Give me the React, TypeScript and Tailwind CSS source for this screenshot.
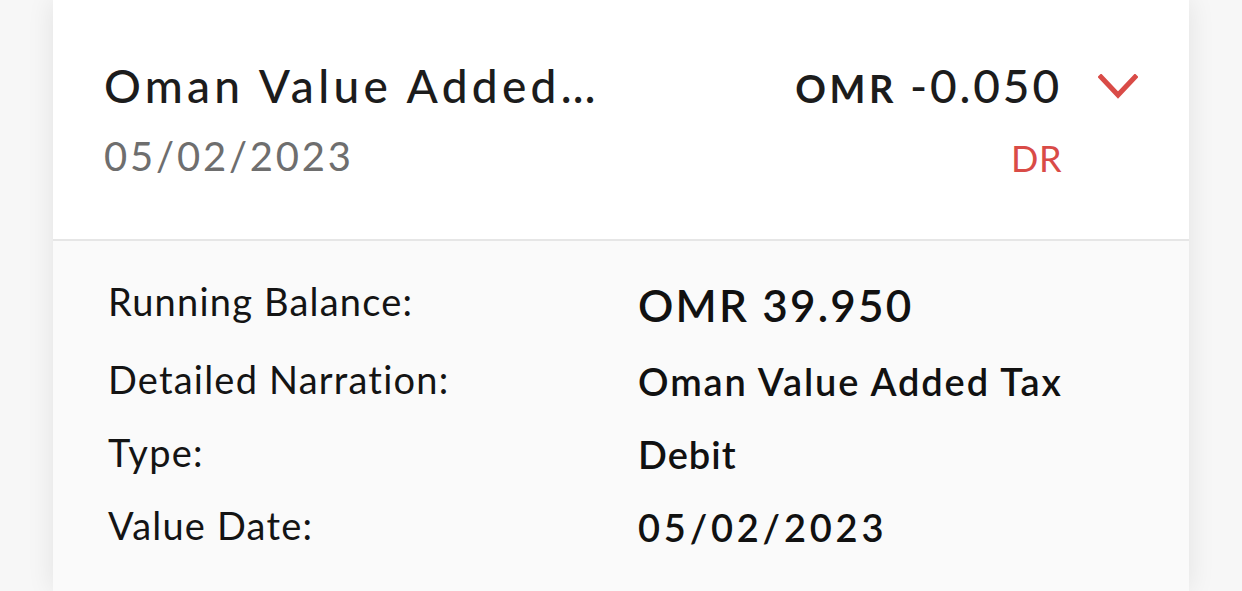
import React from 'react';

const font = { fontFamily: 'Lato, "Noto Sans", sans-serif' };

const details = [
  { label: 'Running Balance:', value: 'OMR 39.950', cls: 'text-[44px] leading-[54px] tracking-[2.2px] pt-[8px]' },
  { label: 'Detailed Narration:', value: 'Oman Value Added Tax', cls: 'text-[38px] leading-[48px] tracking-[1.9px] pt-[4px]' },
  { label: 'Type:', value: 'Debit', cls: 'text-[38px] leading-[48px] tracking-[1px] pt-[4px]' },
  { label: 'Value Date:', value: '05/02/2023', cls: 'text-[38px] leading-[48px] tracking-[3.8px] pt-[4px]' },
];

const Chevron = () => (
  <svg width="40" height="26" viewBox="0 0 40 26" fill="none">
    <path d="M3 3 L20 21 L37 3" stroke="#d94b47" strokeWidth="5" strokeLinecap="square" />
  </svg>
);

export default function App() {
  return (
    <div className="w-[1242px] h-[591px] overflow-hidden bg-[#f7f7f7]" style={font}>
      <div className="mx-[53px] h-full bg-white shadow-[0_0_26px_rgba(0,0,0,0.09)] flex flex-col">
        {/* Header */}
        <div className="flex items-start justify-between pl-[51px] pr-[51px] pt-[58px] pb-[57px] border-b-2 border-[#e6e6e6]">
          <div className="flex flex-col gap-[18px]">
            <div className="text-[46px] leading-[56px] tracking-[4.3px] font-medium text-[#1c1c1c] whitespace-nowrap">
              Oman Value Added…
            </div>
            <div className="text-[40px] leading-[48px] tracking-[2.8px] text-[#6e6e6e]">05/02/2023</div>
          </div>
          <div className="flex items-start gap-[36px]">
            <div className="flex flex-col items-end gap-[18px]">
              <div className="flex items-baseline leading-[56px] text-[#1c1c1c] whitespace-nowrap">
                <span className="text-[38px] font-bold tracking-[3.5px] mr-[13px]">OMR</span>
                <span className="text-[46px] font-medium tracking-[2.9px]">-0.050</span>
              </div>
              <div className="text-[36px] leading-[48px] text-[#d94b47] tracking-[0.5px]">DR</div>
            </div>
            <div className="pt-[16px]">
              <Chevron />
            </div>
          </div>
        </div>
        {/* Details */}
        <div className="flex-1 bg-[#fafafa] pl-[55px] pt-[29px] flex flex-col gap-[21px]">
          {details.map((d) => (
            <div key={d.label} className="grid grid-cols-[530px_1fr] items-center">
              <div className="text-[38px] leading-[48px] tracking-[1.2px] text-[#141414]">{d.label}</div>
              <div className={`${d.cls} font-semibold text-[#111]`}>{d.value}</div>
            </div>
          ))}
        </div>
      </div>
    </div>
  );
}
